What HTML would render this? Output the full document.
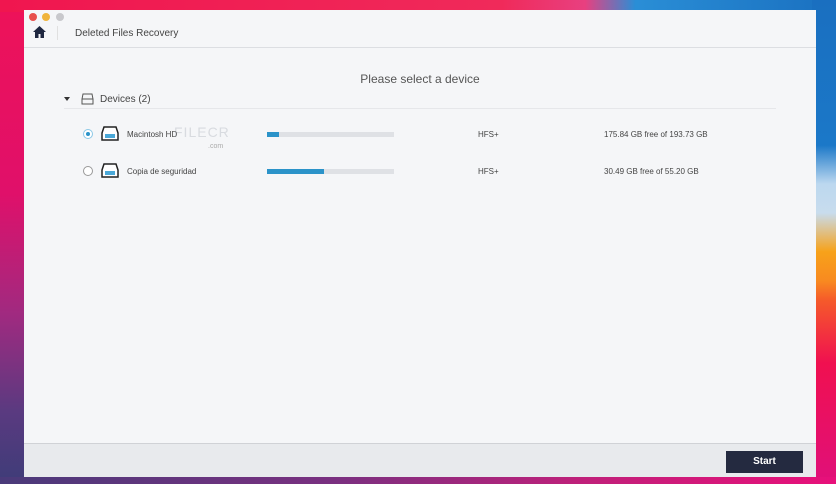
<!DOCTYPE html>
<html><head><meta charset="utf-8"><style>
*{margin:0;padding:0;box-sizing:border-box}
body{width:836px;height:484px;overflow:hidden;position:relative;font-family:"Liberation Sans",sans-serif;
background:linear-gradient(180deg,#ee1258 0%,#e0106a 40%,#a02a80 65%,#5a3a80 85%,#3e3c78 100%);}
.bgtop{position:absolute;left:0;top:0;width:836px;height:12px;background:linear-gradient(90deg,#f0164f 0%,#f02a5a 60%,#e84080 70%,#2a8ed6 76%,#1a70c0 100%)}
.bgtr{position:absolute;right:0;top:0;width:24px;height:484px;background:linear-gradient(180deg,#1a6fc0 0%,#1b78c8 30%,#bcd8ef 38%,#c8dced 44%,#f7a21a 52%,#f88a20 58%,#f55a2a 62%,#f01050 75%,#e0107a 100%)}
.bgbot{position:absolute;left:0;bottom:0;width:836px;height:7px;background:linear-gradient(90deg,#4a3a7a,#7a3080 40%,#c0207a 70%,#e8107a)}
.win{position:absolute;left:24px;top:10px;width:792px;height:467px;background:#f5f6f8;overflow:hidden}
.dot{position:absolute;top:3px;width:8px;height:8px;border-radius:50%}
.hdr{position:absolute;left:0;top:0;width:100%;height:38px;border-bottom:1px solid #dcdee2}
.title{position:absolute;left:51px;top:18px;font-size:10px;color:#444}
.sep{position:absolute;left:33px;top:16px;width:1px;height:14px;background:#e0e0e0}
.h1{position:absolute;left:0;width:100%;top:62px;text-align:center;font-size:12px;color:#555}
.devs{position:absolute;left:76px;top:84px;font-size:10px;color:#444}
.line{position:absolute;left:40px;top:98px;width:712px;height:1px;background:#e6e7ea}
.row{position:absolute;left:0;width:100%;font-size:8px;color:#444}
.radio{position:absolute;left:59px;width:10px;height:10px;border-radius:50%;border:1px solid #999;background:#fff}
.bar{position:absolute;left:243px;width:127px;height:5px;background:#dfe1e5}
.bar i{display:block;height:5px;background:#2b93c9}
.foot{position:absolute;left:0;top:433px;width:100%;height:34px;background:#e8eaed;border-top:1px solid #d0d2d6}
.btn{position:absolute;left:702px;top:7px;width:77px;height:22px;background:#242a40;color:#fff;font-weight:bold;font-size:10px;text-align:center;line-height:22px}
</style></head><body>
<div class="bgtop"></div><div class="bgtr"></div><div class="bgbot"></div>
<div class="win">
<div class="hdr">
<div class="dot" style="left:5px;background:#e8504c"></div>
<div class="dot" style="left:18px;background:#f0b43c"></div>
<div class="dot" style="left:32px;background:#c8c8cc"></div>
<svg style="position:absolute;left:9px;top:16px" width="13" height="12" viewBox="0 0 13 12"><path d="M6.5 0L0 6h2v6h3.5V8h2v4H11V6h2z" fill="#1f2740"/></svg>
<div class="sep"></div>
<div class="title">Deleted Files Recovery</div>
</div>
<div class="h1">Please select a device</div>
<svg style="position:absolute;left:40px;top:87px" width="6" height="4"><path d="M0 0h6L3 4z" fill="#333"/></svg>
<svg style="position:absolute;left:57px;top:83px" width="13" height="12" viewBox="0 0 13 12"><path d="M2 1h9l1 5v5H1V6z M1 6h11" fill="none" stroke="#555" stroke-width="1"/></svg>
<div class="devs">Devices (2)</div>
<div class="line"></div>
<div class="row" style="top:118px">
<div class="radio" style="top:1px;border-color:#8cc8e6"><div style="width:4px;height:4px;border-radius:50%;background:#2b93c9;margin:2px"></div></div>
<svg style="position:absolute;left:77px;top:-2px" width="18" height="15" viewBox="0 0 18 15"><path d="M3 1h12l2 6v7H1V7z" fill="#fff" stroke="#222" stroke-width="1.5"/><rect x="4" y="8" width="10" height="4" fill="#4aa8d8"/></svg>
<div style="position:absolute;left:103px;top:2px">Macintosh HD</div>
<div style="position:absolute;left:150px;top:-4px;font-size:14px;color:rgba(130,140,150,.25);letter-spacing:1px">FILECR</div>
<div style="position:absolute;left:184px;top:15px;font-size:7px;color:#aaa">.com</div>
<div class="bar" style="top:4px"><i style="width:12px"></i></div>
<div style="position:absolute;left:454px;top:2px">HFS+</div>
<div style="position:absolute;left:580px;top:2px">175.84 GB free of 193.73 GB</div>
</div>
<div class="row" style="top:155px">
<div class="radio" style="top:1px"></div>
<svg style="position:absolute;left:77px;top:-2px" width="18" height="15" viewBox="0 0 18 15"><path d="M3 1h12l2 6v7H1V7z" fill="#fff" stroke="#222" stroke-width="1.5"/><rect x="4" y="8" width="10" height="4" fill="#4aa8d8"/></svg>
<div style="position:absolute;left:103px;top:2px">Copia de seguridad</div>
<div class="bar" style="top:4px"><i style="width:57px"></i></div>
<div style="position:absolute;left:454px;top:2px">HFS+</div>
<div style="position:absolute;left:580px;top:2px">30.49 GB free of 55.20 GB</div>
</div>
<div class="foot"><div class="btn">Start</div></div>
</div>
</body></html>
